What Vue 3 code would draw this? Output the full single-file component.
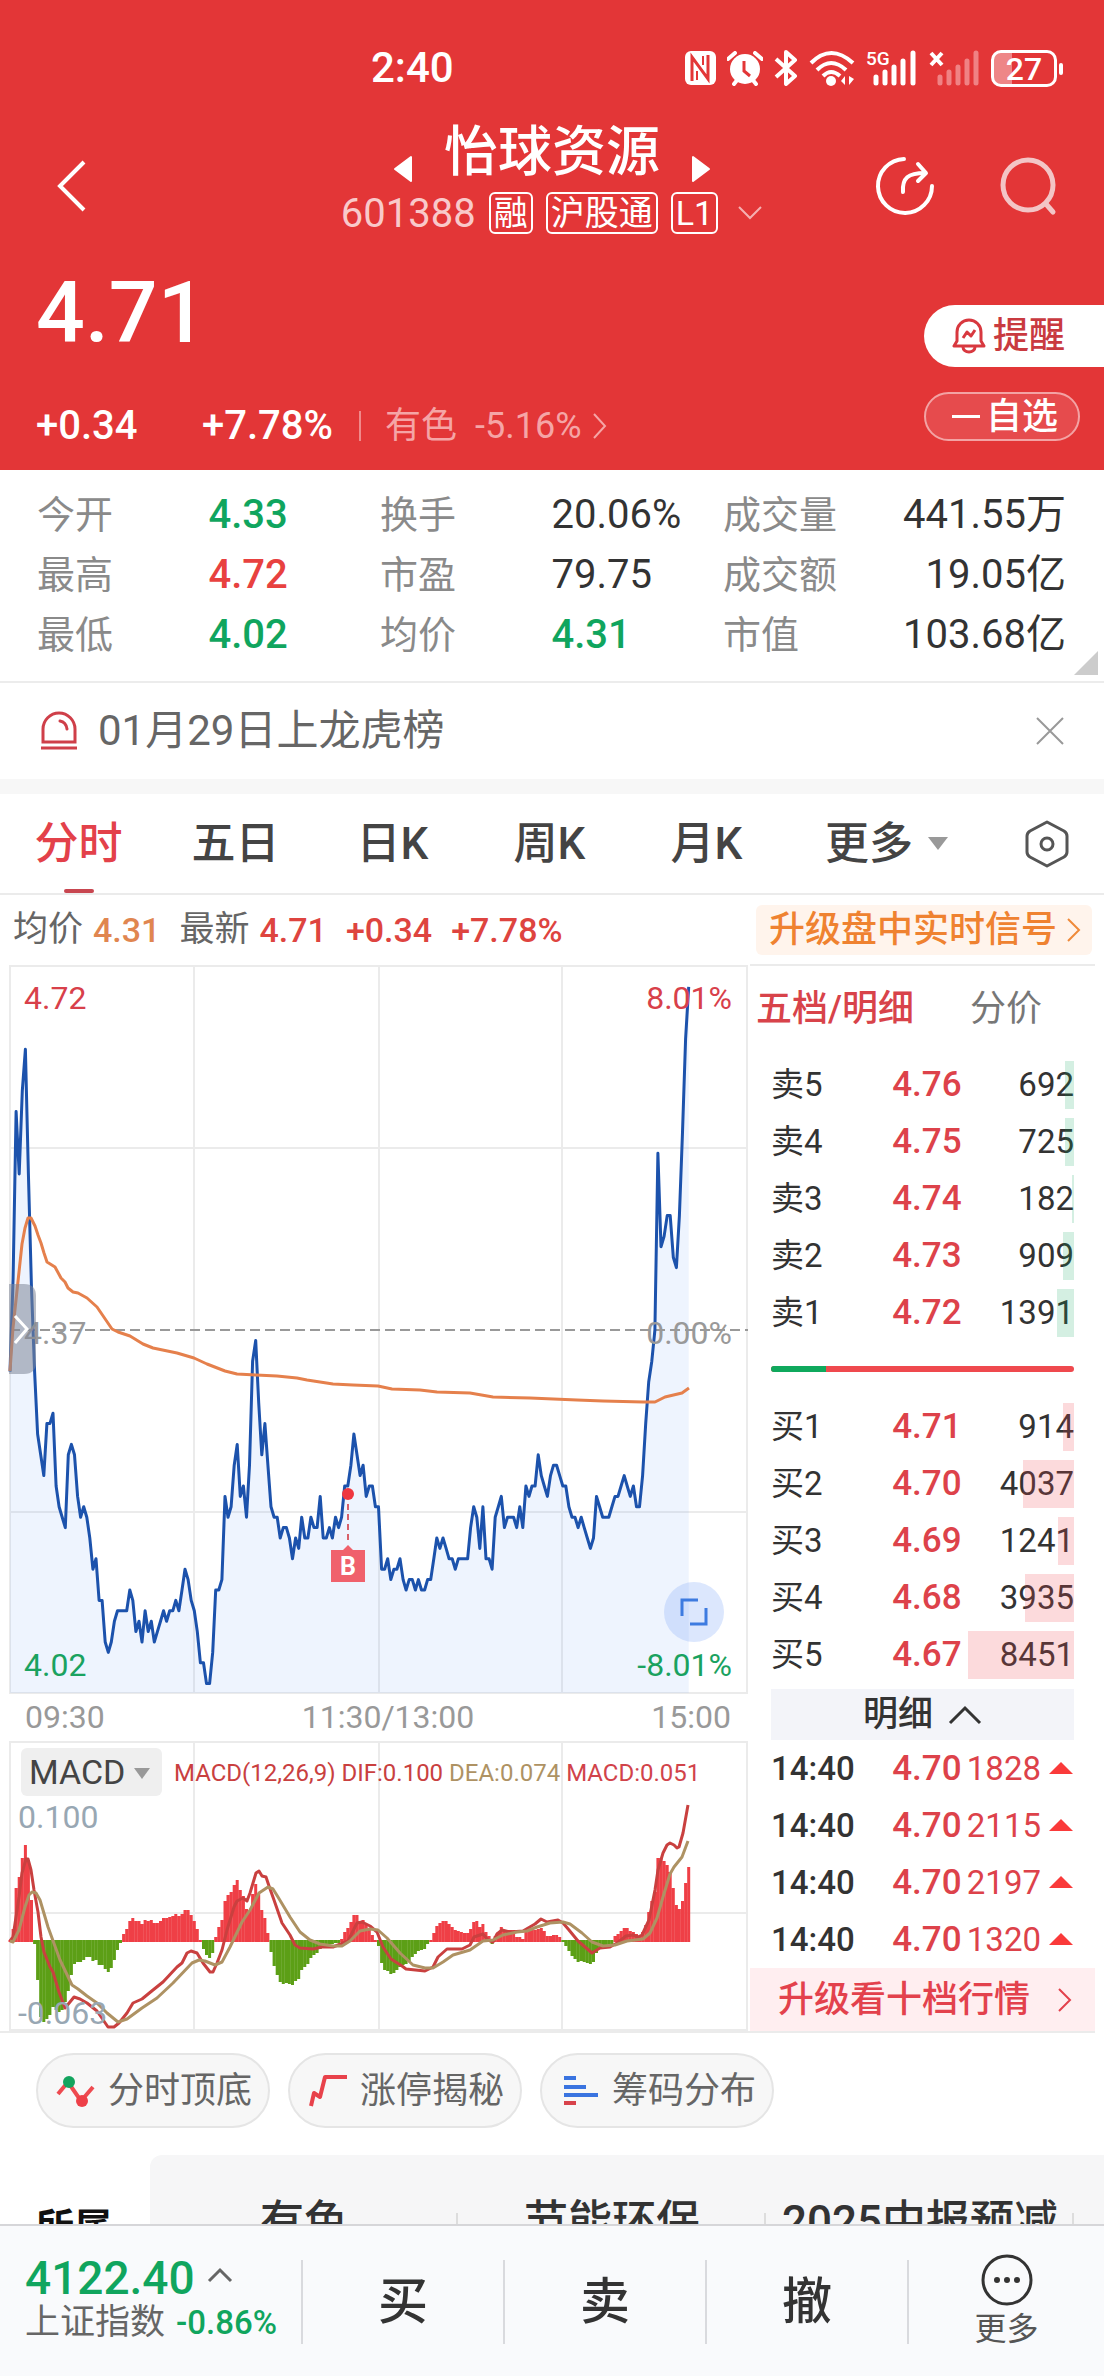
<script setup>
const stats = [
  { label: '今开', value: '4.33', tone: 'down' },
  { label: '换手', value: '20.06%', tone: '' },
  { label: '成交量', value: '441.55万', tone: '' },
  { label: '最高', value: '4.72', tone: 'up' },
  { label: '市盈', value: '79.75', tone: '' },
  { label: '成交额', value: '19.05亿', tone: '' },
  { label: '最低', value: '4.02', tone: 'down' },
  { label: '均价', value: '4.31', tone: 'down' },
  { label: '市值', value: '103.68亿', tone: '' },
]

const tabs = ['分时', '五日', '日K', '周K', '月K']

const asks = [
  { name: '卖5', price: '4.76', qty: 692 },
  { name: '卖4', price: '4.75', qty: 725 },
  { name: '卖3', price: '4.74', qty: 182 },
  { name: '卖2', price: '4.73', qty: 909 },
  { name: '卖1', price: '4.72', qty: 1391 },
]
const bids = [
  { name: '买1', price: '4.71', qty: 914 },
  { name: '买2', price: '4.70', qty: 4037 },
  { name: '买3', price: '4.69', qty: 1241 },
  { name: '买4', price: '4.68', qty: 3935 },
  { name: '买5', price: '4.67', qty: 8451 },
]
const depthWidth = (qty) => `${(qty / 8451) * 35}%`

const ticks = [
  { time: '14:40', price: '4.70', qty: 1828 },
  { time: '14:40', price: '4.70', qty: 2115 },
  { time: '14:40', price: '4.70', qty: 2197 },
  { time: '14:40', price: '4.70', qty: 1320 },
]

const sectors = ['有色', '节能环保', '2025中报预减', '']

// One price per minute, in cents.
const prices = [
  433, 442, 458, 452, 460, 464, 452, 441, 433, 427, 425, 423, 428, 428, 429, 422, 420, 419, 418, 425,
  426, 425, 421, 419, 420, 419, 417, 414, 415, 411, 411, 407, 406, 407, 409, 410, 410, 410, 410, 412,
  411, 408, 409, 407, 410, 408, 409, 407, 408, 409, 410, 409, 410, 410, 411, 410, 412, 414, 413, 411,
  410, 408, 405, 405, 403, 403, 406, 412, 412, 413, 421, 419, 420, 424, 426, 421, 422, 419, 424, 434,
  436, 430, 425, 428, 424, 420, 419, 419, 417, 418, 418, 417, 415, 417, 416, 419, 417, 417, 419, 418,
  418, 421, 417, 417, 418, 417, 419, 418, 419, 422, 422, 424, 427, 425, 423, 424, 421, 422, 422, 420,
  420, 414, 414, 415, 413, 414, 414, 415, 413, 412, 413, 413, 412, 413, 412, 412, 413, 413, 415, 417,
  416, 417, 416, 415, 415, 414, 415, 415, 415, 415, 418, 420, 419, 416, 420, 415, 415, 414, 419, 420,
  421, 418, 419, 419, 419, 418, 420, 418, 422, 421, 422, 422, 425, 423, 422, 421, 423, 424, 424, 423,
  422, 422, 420, 419, 419, 418, 419, 418, 417, 416, 417, 421, 420, 419, 419, 419, 420, 421, 421, 422,
  423, 422, 421, 422, 420, 420, 423, 428, 432, 434, 437, 454, 445, 446, 448, 448, 444, 443, 448, 456,
  465, 470,
]
const minuteX = (m) => 10 + (m * 737) / 240
const pricePoints = prices
  .map((p, m) => `${minuteX(m).toFixed(1)},${(366 - (p - 437) * 10.4).toFixed(1)}`)
  .join(' ')
const areaPoints = `10,729 ${pricePoints} ${minuteX(prices.length - 1).toFixed(1)},729`

// One MACD bar per minute, in chart units above or below the zero line.
const bars = [
  1, 12, 53, 64, 83, 96, 81, 41, -3, -39, -76, -81, -78, -74, -66, -69, -71, -69, -61, -50,
  -34, -23, -21, -21, -19, -16, -16, -20, -19, -24, -24, -28, -31, -27, -19, -9, -2, 7, 12, 20,
  23, 20, 20, 17, 21, 20, 21, 18, 18, 20, 23, 23, 24, 25, 27, 25, 27, 31, 31, 26,
  20, 12, 1, -8, -14, -17, -12, 4, 14, 21, 40, 46, 49, 56, 61, 51, 45, 32, 30, 47,
  57, 47, 31, 23, 8, -11, -25, -34, -41, -43, -42, -43, -44, -40, -38, -29, -26, -23, -17, -14,
  -12, -8, -7, -4, -3, -3, -2, -2, 2, 9, 13, 19, 26, 26, 20, 21, 16, 12, 6, 1,
  -5, -22, -29, -30, -33, -32, -29, -26, -24, -23, -20, -16, -13, -10, -9, -8, -3, 1, 8, 15,
  18, 20, 20, 17, 14, 11, 10, 9, 8, 8, 12, 19, 20, 14, 17, 9, 5, -3, 5, 9,
  14, 11, 11, 11, 11, 4, 4, 2, 9, 11, 11, 11, 12, 13, 10, 5, 5, 6, 6, 4,
  -1, -5, -10, -15, -18, -21, -20, -21, -22, -23, -21, -12, -8, -6, -5, -4, -3, 5, 7, 10,
  13, 13, 10, 9, 7, 5, 9, 16, 29, 40, 49, 83, 83, 80, 76, 69, 53, 36, 32, 40,
  58, 74,
]
const barPath = (keep) =>
  bars
    .map((b, m) => (keep(b) ? `M${minuteX(m).toFixed(1)} ${b > 0 ? 201 : 199}V${200 - b}` : ''))
    .join('')
const upBars = barPath((b) => b > 0)
const downBars = barPath((b) => b < 0)
</script>

<template>
  <div class="page">
    <header class="hero">
      <div class="status">
        <span class="clock">2:40</span>
        <div class="status-icons">
          <svg width="31" height="34" viewBox="0 0 31 34"><rect x="0" y="0" width="31" height="34" rx="6" fill="#fff" /><path d="M7 30V6l16 22V4" fill="none" stroke="#e33637" stroke-width="3" /><path d="M12 29V20M18 5v9" stroke="#e33637" stroke-width="2" /></svg>
          <svg width="36" height="35" viewBox="0 0 36 35"><circle cx="18" cy="18" r="15" fill="#fff" /><path d="M1 8l7-6M35 8l-7-6M7 33l4-5M29 33l-4-5" stroke="#fff" stroke-width="4" stroke-linecap="round" /><path d="M17 10v10l6 5" fill="none" stroke="#e33637" stroke-width="3" /></svg>
          <svg width="24" height="36" viewBox="0 0 24 36"><path d="M2 9l19 17-9 8V2l9 8L2 27" fill="none" stroke="#fff" stroke-width="4" stroke-linejoin="round" /></svg>
          <svg width="46" height="36" viewBox="0 0 46 36"><g fill="none" stroke="#fff" stroke-width="4"><path d="M2 13q20-20 42 0" /><path d="M8 20q14-14 29 0" /><path d="M14 26q8-8 17 0" /></g><circle cx="22" cy="31" r="5" fill="#fff" /><path d="M32 31l4-5v9zM40 26v9l5-6z" fill="#fff" /></svg>
          <div class="cell">
            <span>5G</span>
            <svg width="52" height="36" viewBox="0 0 52 36"><path d="M10 33v-6M19 33V22M28 33V17M37 33V11M47 33V3" stroke="#fff" stroke-width="5" stroke-linecap="round" /></svg>
          </div>
          <svg width="51" height="36" viewBox="0 0 51 36"><path d="M2 3l11 12M13 3L2 15" stroke="#fff" stroke-width="4" /><path d="M11 33v-6M20 33V22M29 33V17M38 33V11M47 33V3" stroke="#f08284" stroke-width="5" stroke-linecap="round" /></svg>
          <span class="battery">27</span>
        </div>
      </div>

      <div class="nav">
        <button class="icon-btn back" aria-label="返回">
          <svg width="30" height="52" viewBox="0 0 30 52"><path d="M27 2L3 26l24 24" fill="none" stroke="#fff" stroke-width="4" /></svg>
        </button>
        <div class="title-block">
          <div class="title-row">
            <button class="icon-btn" aria-label="上一只"><svg width="20" height="28" viewBox="0 0 20 28"><path d="M18 2v24L2 14z" fill="#fff" stroke="#fff" stroke-width="2" stroke-linejoin="round" /></svg></button>
            <h1>怡球资源</h1>
            <button class="icon-btn" aria-label="下一只"><svg width="20" height="28" viewBox="0 0 20 28"><path d="M2 2v24l16-12z" fill="#fff" stroke="#fff" stroke-width="2" stroke-linejoin="round" /></svg></button>
          </div>
          <div class="code-row">
            <span class="code">601388</span>
            <span class="tag">融</span><span class="tag">沪股通</span><span class="tag">L1</span>
            <svg class="code-arrow" width="26" height="14" viewBox="0 0 26 14"><path d="M2 1l11 11L24 1" fill="none" stroke="#f5b0b1" stroke-width="2" /></svg>
          </div>
        </div>
        <div class="actions">
          <button class="icon-btn" aria-label="分享"><svg width="62" height="62" viewBox="0 0 62 62"><g fill="none" stroke="#fff" stroke-width="4" stroke-linecap="round" stroke-linejoin="round"><path d="M30 4A27 27 0 1 0 58 31" /><path d="M29 37c-1-14 5-19 22-19" /><path d="M44 9l8 9-8 8" /></g></svg></button>
          <button class="icon-btn" aria-label="搜索"><svg width="60" height="60" viewBox="0 0 60 60"><g fill="none" stroke="#f3c5c6" stroke-width="5" stroke-linecap="round"><circle cx="30" cy="29" r="25" /><path d="M48 48l7 8" /></g></svg></button>
        </div>
      </div>

      <div class="quote">
        <div>
          <p class="price">4.71</p>
          <p class="change">
            <span class="delta">+0.34</span><span class="pct">+7.78%</span>
            <a href="#sector" class="sector-link">有色<span>-5.16%</span>
              <svg width="16" height="28" viewBox="0 0 16 28"><path d="M2 2l11 12L2 26" fill="none" stroke="#f5a5a6" stroke-width="2" /></svg>
            </a>
          </p>
        </div>
        <div class="quote-actions">
          <button class="remind">
            <svg width="34" height="36" viewBox="0 0 34 36"><g fill="none" stroke="#d8383f" stroke-width="3" stroke-linejoin="round"><path d="M2 28h30l-3-5V14a12 12 0 0 0-24 0v9z" /><path d="M11 29a6 5 0 0 0 12 0" /><path d="M11 20l4-6 4 4 4-6" /></g></svg>
            提醒
          </button>
          <button class="watch"><i></i>自选</button>
        </div>
      </div>
    </header>

    <main>
      <dl class="stats">
        <div v-for="s in stats" :key="s.label"><dt>{{ s.label }}</dt><dd :class="s.tone">{{ s.value }}</dd></div>
      </dl>

      <div class="notice">
        <svg width="38" height="40" viewBox="0 0 38 40"><g fill="none" stroke="#cf3f49" stroke-width="3"><path d="M3 31V18a16 16 0 0 1 32 0v13zM1 37h36" /><path d="M20 10q6 1 7 8" stroke-linecap="round" /></g></svg>
        <a href="#lhb">01月29日上龙虎榜</a>
        <button class="icon-btn" aria-label="关闭"><svg width="30" height="30" viewBox="0 0 30 30"><path d="M2 2l26 26M28 2L2 28" stroke="#999" stroke-width="2" /></svg></button>
      </div>

      <nav class="tabs">
        <button v-for="(t, i) in tabs" :key="t" class="tab" :class="{ active: i === 0 }">{{ t }}</button>
        <button class="tab more">更多<svg width="22" height="16" viewBox="0 0 22 16"><path d="M1 1h20L11 14z" fill="#999" /></svg></button>
        <button class="tab gear" aria-label="设置"><svg width="46" height="48" viewBox="0 0 46 48"><g fill="none" stroke="#555" stroke-width="3" stroke-linejoin="round"><path d="M23 2l17 9q3 2 3 5v16q0 3-3 5l-17 9-17-9q-3-2-3-5V16q0-3 3-5z" /><circle cx="23" cy="24" r="6" /></g></svg></button>
      </nav>

      <div class="info">
        <span>均价</span><b class="avg">4.31</b>
        <span class="latest">最新</span><b>4.71</b><b class="wide">+0.34</b><b class="wide">+7.78%</b>
        <a href="#signal" class="signal">升级盘中实时信号<svg width="16" height="26" viewBox="0 0 16 26"><path d="M2 2l11 11L2 24" fill="none" stroke="#ef8a3a" stroke-width="2" /></svg></a>
      </div>

      <div class="board">
        <section class="charts">
          <svg class="chart" viewBox="0 0 750 730">
            <path d="M10 2H747V729H10zM10 184H747M10 548H747M194 2V729M379 2V729M562 2V729" class="grid" />
            <polygon :points="areaPoints" fill="#5b96f5" fill-opacity=".1" />
            <path d="M10 366H748" stroke="#999" stroke-width="2" stroke-dasharray="10 5" />
            <polyline :points="pricePoints" class="line" stroke="#1c52ac" />
            <polyline class="line" stroke="#e5804c" points="10,407 13,364 19,308 22,280 25,264 28,254 31,254 35,262 38,271 41,279 44,289 47,298 55,303 61,314 65,318 68,324 73,328 78,329 87,334 97,343 112,365 118,368 130,372 143,380 153,384 177,389 194,394 207,400 225,407 237,410 256,411 277,412 297,414 307,416 333,420 353,421 378,422 392,425 420,426 437,428 470,429 493,433 530,434 577,436 603,437 643,438 655,438 665,433 682,429 689,424" />
            <text x="24" y="45" fill="#d8404a">4.72</text>
            <text x="732" y="45" text-anchor="end" fill="#d8404a">8.01%</text>
            <text x="24" y="380" fill="#999">4.37</text>
            <text x="732" y="380" text-anchor="end" fill="#999">0.00%</text>
            <text x="24" y="712" fill="#1aa260">4.02</text>
            <text x="732" y="712" text-anchor="end" fill="#1aa260">-8.01%</text>
            <path d="M348 540V576" stroke="#d8606a" stroke-width="2" stroke-dasharray="6 4" />
            <circle cx="348" cy="530" r="6" fill="#ef3740" />
            <path d="M331 586h12l5-5 5 5h12v32h-34z" fill="#f0616c" />
            <text x="348" y="611" text-anchor="middle" class="flag">B</text>
            <path d="M9 320h15q12 0 12 12v66q0 12-12 12H9z" fill="#808698" fill-opacity=".55" />
            <path d="M15 352l12 13-12 14" fill="none" stroke="#fff" stroke-width="3" />
            <circle cx="694" cy="648" r="30" fill="#8cb0f8" fill-opacity=".3" />
            <path d="M682 652V636H698M690 660H706V644" fill="none" stroke="#3d7be0" stroke-width="3" />
          </svg>
          <div class="axis"><span>09:30</span><span>11:30/13:00</span><span>15:00</span></div>
          <div class="macd">
            <svg class="chart" viewBox="0 0 750 290">
              <path d="M10 1H747V289H10zM10 172H747M194 1V289M379 1V289M562 1V289" class="grid" />
              <path :d="upBars" stroke="#ef3f46" stroke-width="3" />
              <path :d="downBars" stroke="#5c9f16" stroke-width="3" />
              <polyline class="line" stroke="#c9403f" points="10,200 13,196 16,176 19,156 22,132 26,118 28,118 31,129 34,149 38,171 41,196 44,211 50,226 53,231 59,251 65,267 70,261 74,256 80,258 87,262 97,270 108,286 114,286 119,282 127,272 133,262 142,258 153,249 163,241 177,226 182,222 187,212 191,210 197,212 203,222 210,231 213,231 217,222 222,209 227,189 234,166 237,160 243,157 247,160 250,152 256,132 259,130 262,135 266,136 269,145 274,159 282,182 290,194 295,204 300,207 313,208 322,206 333,206 348,200 357,182 362,181 370,185 377,191 383,206 391,218 402,225 406,228 425,230 433,226 438,216 447,208 462,208 470,204 474,196 483,193 488,199 493,201 497,193 502,189 510,191 523,190 535,183 541,178 547,181 558,179 563,182 569,189 578,200 592,212 600,207 610,206 617,202 626,195 633,194 638,196 642,194 649,179 655,149 658,129 663,112 667,104 670,102 674,104 677,107 679,106 683,92 688,64" />
              <polyline class="line" stroke="#ae9263" points="10,200 13,201 19,189 25,166 29,154 32,151 36,152 40,159 48,186 60,219 72,244 78,248 87,255 97,262 107,272 118,281 127,278 142,267 157,257 173,242 192,222 199,219 205,220 215,224 222,221 230,206 242,181 250,169 259,152 268,146 273,148 278,156 290,176 300,191 310,199 320,203 333,205 342,205 350,200 360,190 370,188 378,189 387,197 400,212 413,224 425,227 433,227 443,221 453,214 470,209 483,200 493,199 503,194 517,191 527,190 537,186 550,182 563,181 570,183 582,192 592,201 603,205 615,204 627,200 643,198 650,192 657,177 663,156 670,133 674,126 682,116 688,100" />
              <text x="174" y="40" class="legend"><tspan fill="#c9403f">MACD(12,26,9) DIF:0.100 </tspan><tspan fill="#ae9263">DEA:0.074 </tspan><tspan fill="#d1434a">MACD:0.051</tspan></text>
              <text x="18" y="87" fill="#98a7b3">0.100</text>
              <text x="18" y="283" fill="#98a7b3">-0.063</text>
            </svg>
            <label class="indicator"><select aria-label="指标"><option>MACD</option></select></label>
          </div>
        </section>

        <aside class="depth">
          <div class="depth-tabs"><button class="on">五档/明细</button><button>分价</button></div>
          <table class="book asks">
            <tbody>
              <tr v-for="r in asks" :key="r.name"><th scope="row">{{ r.name }}</th><td class="p">{{ r.price }}</td><td class="q">{{ r.qty }}<i :style="{ width: depthWidth(r.qty) }"></i></td></tr>
            </tbody>
          </table>
          <div class="ratio"><i></i></div>
          <table class="book bids">
            <tbody>
              <tr v-for="r in bids" :key="r.name"><th scope="row">{{ r.name }}</th><td class="p">{{ r.price }}</td><td class="q">{{ r.qty }}<i :style="{ width: depthWidth(r.qty) }"></i></td></tr>
            </tbody>
          </table>
          <button class="detail">明细<svg width="34" height="20" viewBox="0 0 34 20"><path d="M2 18L17 3l15 15" fill="none" stroke="#333" stroke-width="3" /></svg></button>
          <table class="book ticks">
            <tbody>
              <tr v-for="(t, i) in ticks" :key="i"><th scope="row">{{ t.time }}</th><td class="p">{{ t.price }}</td><td class="q">{{ t.qty }}<svg width="26" height="14" viewBox="0 0 26 14"><path d="M13 1l12 12H1z" fill="#fa3a3a" /></svg></td></tr>
            </tbody>
          </table>
          <a href="#level2" class="upgrade">升级看十档行情<svg width="16" height="26" viewBox="0 0 16 26"><path d="M2 2l11 11L2 24" fill="none" stroke="#e3414c" stroke-width="2" /></svg></a>
        </aside>
      </div>

      <div class="chips">
        <button><svg width="40" height="36" viewBox="0 0 40 36"><path d="M2 21L12 9l13 19 12-14" fill="none" stroke="#ee4a50" stroke-width="4" /><circle cx="13" cy="9" r="6" fill="#13a45e" /><circle cx="26" cy="28" r="6" fill="#ee4048" /></svg>分时顶底</button>
        <button><svg width="40" height="36" viewBox="0 0 40 36"><path d="M3 33l3-13 6 4 5-20h22" fill="none" stroke="#e8424b" stroke-width="4" stroke-linejoin="round" /></svg>涨停揭秘</button>
        <button><svg width="40" height="36" viewBox="0 0 40 36"><path d="M4 5h12M4 14h22M4 22h34" stroke="#3a74e0" stroke-width="4" /><path d="M4 30h12" stroke="#d8434b" stroke-width="4" /></svg>筹码分布</button>
      </div>

      <div id="sector" class="sectors">
        <h2>所属</h2>
        <ul><li v-for="(s, i) in sectors" :key="i">{{ s }}</li></ul>
      </div>
    </main>

    <footer class="bar">
      <a href="#index" class="index">
        <span class="idx-value">4122.40<svg width="26" height="16" viewBox="0 0 26 16"><path d="M2 14L13 3l11 11" fill="none" stroke="#666" stroke-width="3" /></svg></span>
        <span class="idx-name">上证指数<em>-0.86%</em></span>
      </a>
      <button class="trade">买</button>
      <button class="trade">卖</button>
      <button class="trade">撤</button>
      <button class="bar-more">
        <svg width="54" height="54" viewBox="0 0 54 54"><circle cx="27" cy="27" r="24" fill="none" stroke="#333" stroke-width="3" /><g fill="#333"><circle cx="17" cy="27" r="3" /><circle cx="27" cy="27" r="3" /><circle cx="37" cy="27" r="3" /></g></svg>
        更多
      </button>
    </footer>
  </div>
</template>

<style>
body {
  margin: 0;
  background: #fff;
}
</style>

<style scoped>
.page {
  height: 100vh;
  display: flex;
  flex-direction: column;
  font-family: Roboto, "Noto Sans CJK SC", sans-serif;
  color: #333;
  overflow: hidden;
}
.page * {
  box-sizing: border-box;
}
button,
select {
  font: inherit;
  color: inherit;
  background: none;
  border: 0;
  padding: 0;
  margin: 0;
}
a {
  color: inherit;
  text-decoration: none;
}
svg {
  display: block;
  flex: none;
}
h1,
h2,
p,
dl,
dd,
ul {
  margin: 0;
  padding: 0;
}
.icon-btn {
  display: block;
}

.hero {
  flex: none;
  background: #e33637;
  color: #fff;
  padding: 46px 0 22px;
}
.status {
  height: 44px;
  display: flex;
  justify-content: space-between;
  align-items: center;
  padding: 0 47px 0 371px;
}
.clock {
  font-size: 42px;
  line-height: 44px;
  font-weight: 500;
}
.status-icons {
  display: flex;
  align-items: center;
  gap: 11px;
}
.cell {
  position: relative;
}
.cell span {
  position: absolute;
  left: 0;
  top: -1px;
  font-size: 19px;
  line-height: 20px;
  font-weight: 500;
}
.battery {
  position: relative;
  width: 66px;
  height: 37px;
  border: 3px solid #fff;
  border-radius: 10px;
  background: linear-gradient(90deg, #ee8687 30%, transparent 30%);
  font-size: 32px;
  line-height: 32px;
  font-weight: 500;
  text-align: center;
}
.battery::after {
  content: "";
  position: absolute;
  right: -9px;
  top: 10px;
  width: 4px;
  height: 12px;
  border-radius: 2px;
  background: #fff;
}
.nav {
  display: grid;
  grid-template-columns: 1fr auto 1fr;
  align-items: center;
  margin-top: 31px;
}
.back {
  padding: 17px 0 0 57px;
}
.title-row {
  display: flex;
  justify-content: center;
  align-items: flex-end;
  gap: 31px;
  height: 62px;
}
h1 {
  font-size: 54px;
  line-height: 60px;
  font-weight: 500;
}
.code-row {
  display: flex;
  align-items: center;
  justify-content: center;
  margin-top: 9px;
  height: 42px;
}
.code {
  font-size: 40px;
  color: #f9c9ca;
  margin-right: 13px;
}
.tag {
  height: 42px;
  border: 2px solid #fff;
  border-radius: 6px;
  padding: 0 3px;
  margin-right: 13px;
  font-size: 34px;
  line-height: 38px;
}
.code-arrow {
  margin-left: 6px;
}
.actions {
  display: flex;
  justify-content: flex-end;
  align-items: center;
  gap: 62px;
  padding: 17px 46px 0 0;
}
.quote {
  display: flex;
  justify-content: space-between;
  margin-top: 34px;
}
.price {
  padding-left: 36px;
  font-size: 86px;
  line-height: 90px;
  font-weight: 500;
}
.change {
  display: flex;
  align-items: center;
  padding-left: 36px;
  margin-top: 46px;
  line-height: 44px;
  font-size: 40px;
  font-weight: 500;
}
.delta {
  width: 166px;
}
.sector-link {
  display: flex;
  align-items: center;
  margin-left: 26px;
  padding-left: 24px;
  border-left: 2px solid #f0898a;
  height: 30px;
  font-size: 36px;
  font-weight: 400;
  color: #f5a5a6;
}
.sector-link span {
  margin: 0 10px 0 18px;
}
.quote-actions {
  display: flex;
  flex-direction: column;
  align-items: flex-end;
  gap: 25px;
  padding-top: 37px;
}
.remind {
  display: flex;
  align-items: center;
  gap: 7px;
  width: 180px;
  height: 62px;
  padding-left: 28px;
  border-radius: 31px 0 0 31px;
  background: #fff;
  color: #c93a40;
  font-size: 36px;
  line-height: 40px;
  font-weight: 500;
}
.watch {
  display: flex;
  align-items: center;
  gap: 6px;
  width: 156px;
  height: 49px;
  margin-right: 24px;
  padding-left: 26px;
  border: 2px solid #f3a3a4;
  border-radius: 25px;
  background: #e64b4d;
  font-size: 36px;
  line-height: 40px;
  font-weight: 500;
}
.watch i {
  width: 28px;
  height: 3px;
  background: #fff;
}

main {
  flex: 1;
  min-height: 0;
  overflow: hidden;
}
.stats {
  position: relative;
  display: grid;
  grid-template-columns: repeat(3, 1fr);
  grid-auto-rows: 60px;
  padding: 15px 38px 16px 37px;
  border-bottom: 2px solid #ececec;
}
.stats::after {
  content: "";
  position: absolute;
  right: 6px;
  bottom: 6px;
  border: 12px solid transparent;
  border-right-color: #ccc;
  border-bottom-color: #ccc;
}
.stats div {
  display: flex;
  align-items: center;
}
.stats dt {
  width: 50%;
  font-size: 38px;
  line-height: 60px;
  color: #8a8a8a;
}
.stats dd {
  font-size: 40px;
  line-height: 60px;
  white-space: nowrap;
}
.stats div:nth-child(3n) dt {
  width: auto;
}
.stats div:nth-child(3n) dd {
  margin-left: auto;
}
.stats .up {
  color: #e8413f;
  font-weight: 500;
}
.stats .down {
  color: #10a55e;
  font-weight: 500;
}
.notice {
  display: flex;
  align-items: center;
  height: 96px;
  padding: 0 39px 0 40px;
  color: #666;
  font-size: 42px;
  line-height: 60px;
}
.notice a {
  flex: 1;
  margin-left: 20px;
}
.tabs {
  display: flex;
  border-top: 15px solid #f7f7f7;
  border-bottom: 2px solid #ebebeb;
}
.tab {
  position: relative;
  flex: 157;
  height: 99px;
  font-size: 44px;
  line-height: 60px;
  font-weight: 500;
  color: #444;
}
.active {
  color: #e3414a;
}
.active::after {
  content: "";
  position: absolute;
  left: 50%;
  bottom: 0;
  width: 30px;
  height: 4px;
  margin-left: -15px;
  border-radius: 2px;
  background: #c84650;
}
.more {
  flex: 204;
  display: flex;
  align-items: center;
  justify-content: center;
  gap: 14px;
}
.gear {
  flex: 115;
  display: flex;
  align-items: center;
  justify-content: center;
}
.info {
  display: flex;
  align-items: center;
  height: 69px;
  padding: 0 12px 0 13px;
  font-size: 35px;
  line-height: 50px;
  color: #666;
}
.info b {
  font-size: 34px;
  font-weight: 500;
  color: #de443f;
  margin-left: 10px;
}
.info .avg {
  color: #e08650;
}
.info .latest {
  margin-left: 19px;
}
.info .wide {
  margin-left: 19px;
}
.signal {
  display: flex;
  align-items: center;
  gap: 9px;
  margin-left: auto;
  height: 50px;
  padding: 0 10px 0 13px;
  border-radius: 6px;
  background: #fff4ec;
  color: #ef8230;
  font-size: 36px;
  font-weight: 500;
}

.board {
  display: flex;
  margin-right: 9px;
  border-bottom: 2px solid #ebebeb;
}
.charts {
  flex: 1;
  min-width: 0;
}
.chart {
  width: 100%;
  height: auto;
}
.chart text {
  font: 400 32px Roboto, sans-serif;
}
.chart .legend {
  font-size: 24px;
}
.chart .flag {
  font-size: 25px;
  font-weight: 700;
  fill: #fff;
}
.grid {
  fill: none;
  stroke: #ebebeb;
  stroke-width: 2;
}
.line {
  fill: none;
  stroke-width: 3;
  stroke-linejoin: round;
}
.axis {
  display: flex;
  justify-content: space-between;
  padding: 0 19px 0 25px;
  font-size: 32px;
  line-height: 47px;
  color: #999;
}
.axis span:nth-child(2) {
  margin-left: 20px;
}
.macd {
  position: relative;
}
.indicator {
  position: absolute;
  left: 21px;
  top: 7px;
}
.indicator select {
  display: block;
  appearance: none;
  width: 141px;
  height: 48px;
  padding: 0 0 0 8px;
  border-radius: 6px;
  background: #efefef;
  font-size: 34px;
  line-height: 48px;
  color: #444;
}
.indicator::after {
  content: "";
  position: absolute;
  right: 12px;
  top: 20px;
  border: 8px solid transparent;
  border-top: 11px solid #999;
  border-bottom: 0;
}
.depth {
  flex: 0 0 345px;
  display: flex;
  flex-direction: column;
  border-top: 2px solid #ebebeb;
}
.depth-tabs {
  display: flex;
  align-items: center;
  gap: 56px;
  height: 90px;
  padding: 0 0 4px 6px;
  font-size: 36px;
  line-height: 50px;
  color: #777;
}
.depth-tabs .on {
  color: #d8434a;
  font-weight: 500;
}
.book {
  margin: 0 21px;
  border-collapse: collapse;
  table-layout: fixed;
}
.book tr {
  position: relative;
}
.book th,
.book td {
  height: 57px;
  padding: 0;
  line-height: 48px;
  text-align: left;
  white-space: nowrap;
}
.book th {
  width: 40%;
  font-size: 33px;
  font-weight: 400;
}
.book .p {
  width: 24%;
  font-size: 35px;
  font-weight: 500;
  color: #dd424a;
}
.book .q {
  font-size: 33px;
  text-align: right;
}
.q i {
  position: absolute;
  right: 0;
  top: 5px;
  height: 48px;
}
.asks .q i {
  background: rgba(16, 165, 94, 0.18);
}
.bids .q i {
  background: rgba(240, 70, 80, 0.2);
}
.ratio {
  height: 6px;
  margin: 25px 21px 26px;
  border-radius: 3px;
  background: #ef494e;
  overflow: hidden;
}
.ratio i {
  display: block;
  width: 18%;
  height: 100%;
  background: #0fa95d;
}
.detail {
  display: flex;
  align-items: center;
  justify-content: center;
  gap: 15px;
  height: 51px;
  margin: 6px 21px 0;
  background: #f3f4f9;
  font-size: 35px;
  line-height: 48px;
  font-weight: 500;
}
.ticks th {
  font-weight: 500;
}
.ticks .q {
  color: #dd424a;
}
.ticks svg {
  display: inline-block;
  margin-left: 7px;
  vertical-align: 5px;
}
.upgrade {
  flex: 1;
  display: flex;
  align-items: center;
  justify-content: space-between;
  padding: 0 22px 0 28px;
  background: #ffeef0;
  color: #e3414c;
  font-size: 36px;
  line-height: 50px;
  font-weight: 500;
}

.chips {
  display: flex;
  gap: 18px;
  padding: 20px 36px 27px;
}
.chips button {
  display: flex;
  align-items: center;
  gap: 12px;
  height: 75px;
  padding: 0 16px 0 18px;
  border: 2px solid #e5e5e5;
  border-radius: 38px;
  background: #f7f7f7;
  font-size: 36px;
  line-height: 50px;
  color: #666;
}
.sectors {
  display: flex;
}
.sectors h2 {
  flex: 0 0 150px;
  padding: 42px 0 0 36px;
  font-size: 38px;
  line-height: 60px;
  font-weight: 700;
  color: #111;
}
.sectors ul {
  flex: 1;
  display: flex;
  overflow: hidden;
  list-style: none;
  border-radius: 12px 0 0 0;
  background: #f6f6f7;
}
.sectors li {
  position: relative;
  flex: 0 0 308px;
  height: 130px;
  padding-top: 37px;
  font-size: 44px;
  line-height: 60px;
  font-weight: 500;
  text-align: center;
}
.sectors li::after {
  content: "";
  position: absolute;
  right: 0;
  top: 58px;
  width: 2px;
  height: 32px;
  background: #ddd;
}

.bar {
  flex: none;
  display: grid;
  grid-template-columns: 301fr 202fr 202fr 202fr 197fr;
  align-items: start;
  height: 152px;
  padding-top: 34px;
  border-top: 2px solid #d6d6d9;
  background: #f9fafc;
}
.index {
  padding-left: 25px;
}
.idx-value {
  display: flex;
  align-items: center;
  gap: 12px;
  font-size: 46px;
  line-height: 36px;
  font-weight: 500;
  color: #10a55e;
}
.idx-value svg {
  margin-bottom: 6px;
}
.idx-name {
  display: flex;
  align-items: center;
  gap: 11px;
  margin-top: 5px;
  font-size: 35px;
  line-height: 44px;
  color: #666;
  white-space: nowrap;
}
.idx-name em {
  font-size: 33px;
  font-style: normal;
  font-weight: 500;
  color: #10a55e;
}
.trade {
  height: 84px;
  border-left: 2px solid #d9dade;
  font-size: 50px;
  line-height: 84px;
  font-weight: 500;
}
.bar-more {
  height: 84px;
  border-left: 2px solid #d9dade;
  display: flex;
  flex-direction: column;
  align-items: center;
  justify-content: center;
  font-size: 32px;
  line-height: 44px;
  color: #555;
}
</style>
